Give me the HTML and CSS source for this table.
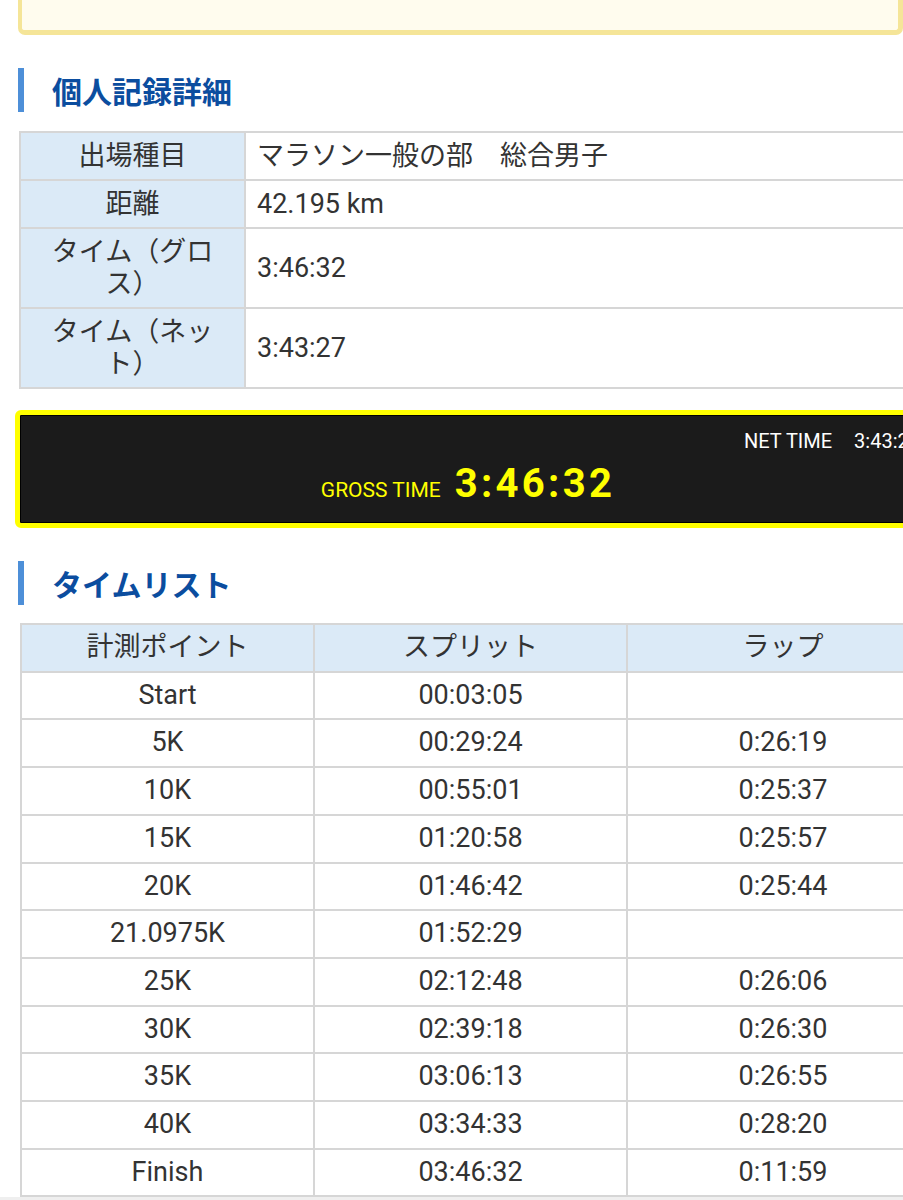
FILE: index.html
```html
<!DOCTYPE html>
<html lang="ja">
<head>
<meta charset="utf-8">
<title>個人記録詳細</title>
<link rel="stylesheet" href="styles.css">
</head>
<body>
<div class="page">
  <div class="notice"></div>

  <h2 class="section-title">個人記録詳細</h2>
  <table class="detail">
    <tr><th>出場種目</th><td>マラソン一般の部　総合男子</td></tr>
    <tr><th>距離</th><td>42.195 km</td></tr>
    <tr><th>タイム（グロス）</th><td>3:46:32</td></tr>
    <tr><th>タイム（ネット）</th><td>3:43:27</td></tr>
  </table>

  <div class="board">
    <div class="board-net"><span class="net-label">NET TIME</span><span class="net-value">3:43:27</span></div>
    <div class="board-gross"><span class="gross-label">GROSS TIME</span><span class="gross-value">3:46:32</span></div>
  </div>

  <h2 class="section-title">タイムリスト</h2>
  <table class="times">
    <thead>
      <tr><th>計測ポイント</th><th>スプリット</th><th>ラップ</th></tr>
    </thead>
    <tbody>
      <tr><td>Start</td><td>00:03:05</td><td></td></tr>
      <tr><td>5K</td><td>00:29:24</td><td>0:26:19</td></tr>
      <tr><td>10K</td><td>00:55:01</td><td>0:25:37</td></tr>
      <tr><td>15K</td><td>01:20:58</td><td>0:25:57</td></tr>
      <tr><td>20K</td><td>01:46:42</td><td>0:25:44</td></tr>
      <tr><td>21.0975K</td><td>01:52:29</td><td></td></tr>
      <tr><td>25K</td><td>02:12:48</td><td>0:26:06</td></tr>
      <tr><td>30K</td><td>02:39:18</td><td>0:26:30</td></tr>
      <tr><td>35K</td><td>03:06:13</td><td>0:26:55</td></tr>
      <tr><td>40K</td><td>03:34:33</td><td>0:28:20</td></tr>
      <tr><td>Finish</td><td>03:46:32</td><td>0:11:59</td></tr>
    </tbody>
  </table>
</div>
</body>
</html>
```
FILE: styles.css
```css
html, body {
  margin: 0;
  padding: 0;
}
body {
  background: #efefef;
  overflow: hidden;
  font-family: Roboto, "Noto Sans CJK JP", sans-serif;
  color: #333;
}
.page {
  width: 885px;
  padding-left: 18px;
  background: #fff;
  overflow: visible;
}
.notice {
  box-sizing: border-box;
  width: 885px;
  height: 55px;
  margin-top: -20px;
  background: #fffcee;
  border-style: solid;
  border-color: #f5e598;
  border-width: 0 5px 5px 4px;
  border-radius: 0 0 7px 7px;
}
.section-title {
  margin: 33px 0 0 0;
  height: 44px;
  line-height: 44px;
  border-left: 6px solid #4d8fd8;
  padding-left: 28px;
  font-family: "Noto Sans CJK JP", sans-serif;
  font-size: 30px;
  font-weight: 700;
  color: #0b4d9f;
  white-space: nowrap;
}
.detail {
  margin: 19px 0 0 1px;
  border-collapse: collapse;
  width: 940px;
  font-size: 27px;
  line-height: 32px;
}
.detail th, .detail td {
  border: 2px solid #d6d6d6;
  padding: 7px 24px;
  font-weight: 400;
}
.detail th {
  width: 175px;
  background: #dbeaf7;
  text-align: center;
}
.detail td {
  padding-left: 11px;
  text-align: left;
  white-space: nowrap;
}
.board {
  box-sizing: border-box;
  width: 930px;
  margin: 21px 0 0 -3px;
  background: #1b1b1b;
  border: 5px solid #ffff00;
  border-radius: 6px;
  box-shadow: inset 0 0 0 1px #000;
  padding: 13px 0 15px 0;
}
.board-net {
  display: flex;
  justify-content: flex-end;
  align-items: baseline;
  gap: 22px;
  padding-right: 20px;
  color: #fff;
  font-size: 20px;
  line-height: 26px;
  white-space: nowrap;
}
.board-gross {
  display: flex;
  justify-content: center;
  align-items: baseline;
  gap: 14px;
  padding-right: 24px;
  margin-top: 6px;
  color: #ffff00;
  white-space: nowrap;
}
.gross-label {
  font-size: 21px;
}
.gross-value {
  font-size: 40px;
  font-weight: 700;
  letter-spacing: 3.3px;
  line-height: 48px;
}
.times {
  margin: 18px 0 0 2px;
  border-collapse: collapse;
  width: 920px;
  font-size: 27px;
  line-height: 33.7px;
  text-align: center;
}
.times th, .times td {
  border: 2px solid #d6d6d6;
  padding: 6px 4px;
  font-weight: 400;
  white-space: nowrap;
}
.times th {
  background: #dbeaf7;
}
.times th:nth-child(1) { width: 283px; }
.times th:nth-child(2) { width: 303px; }
```
